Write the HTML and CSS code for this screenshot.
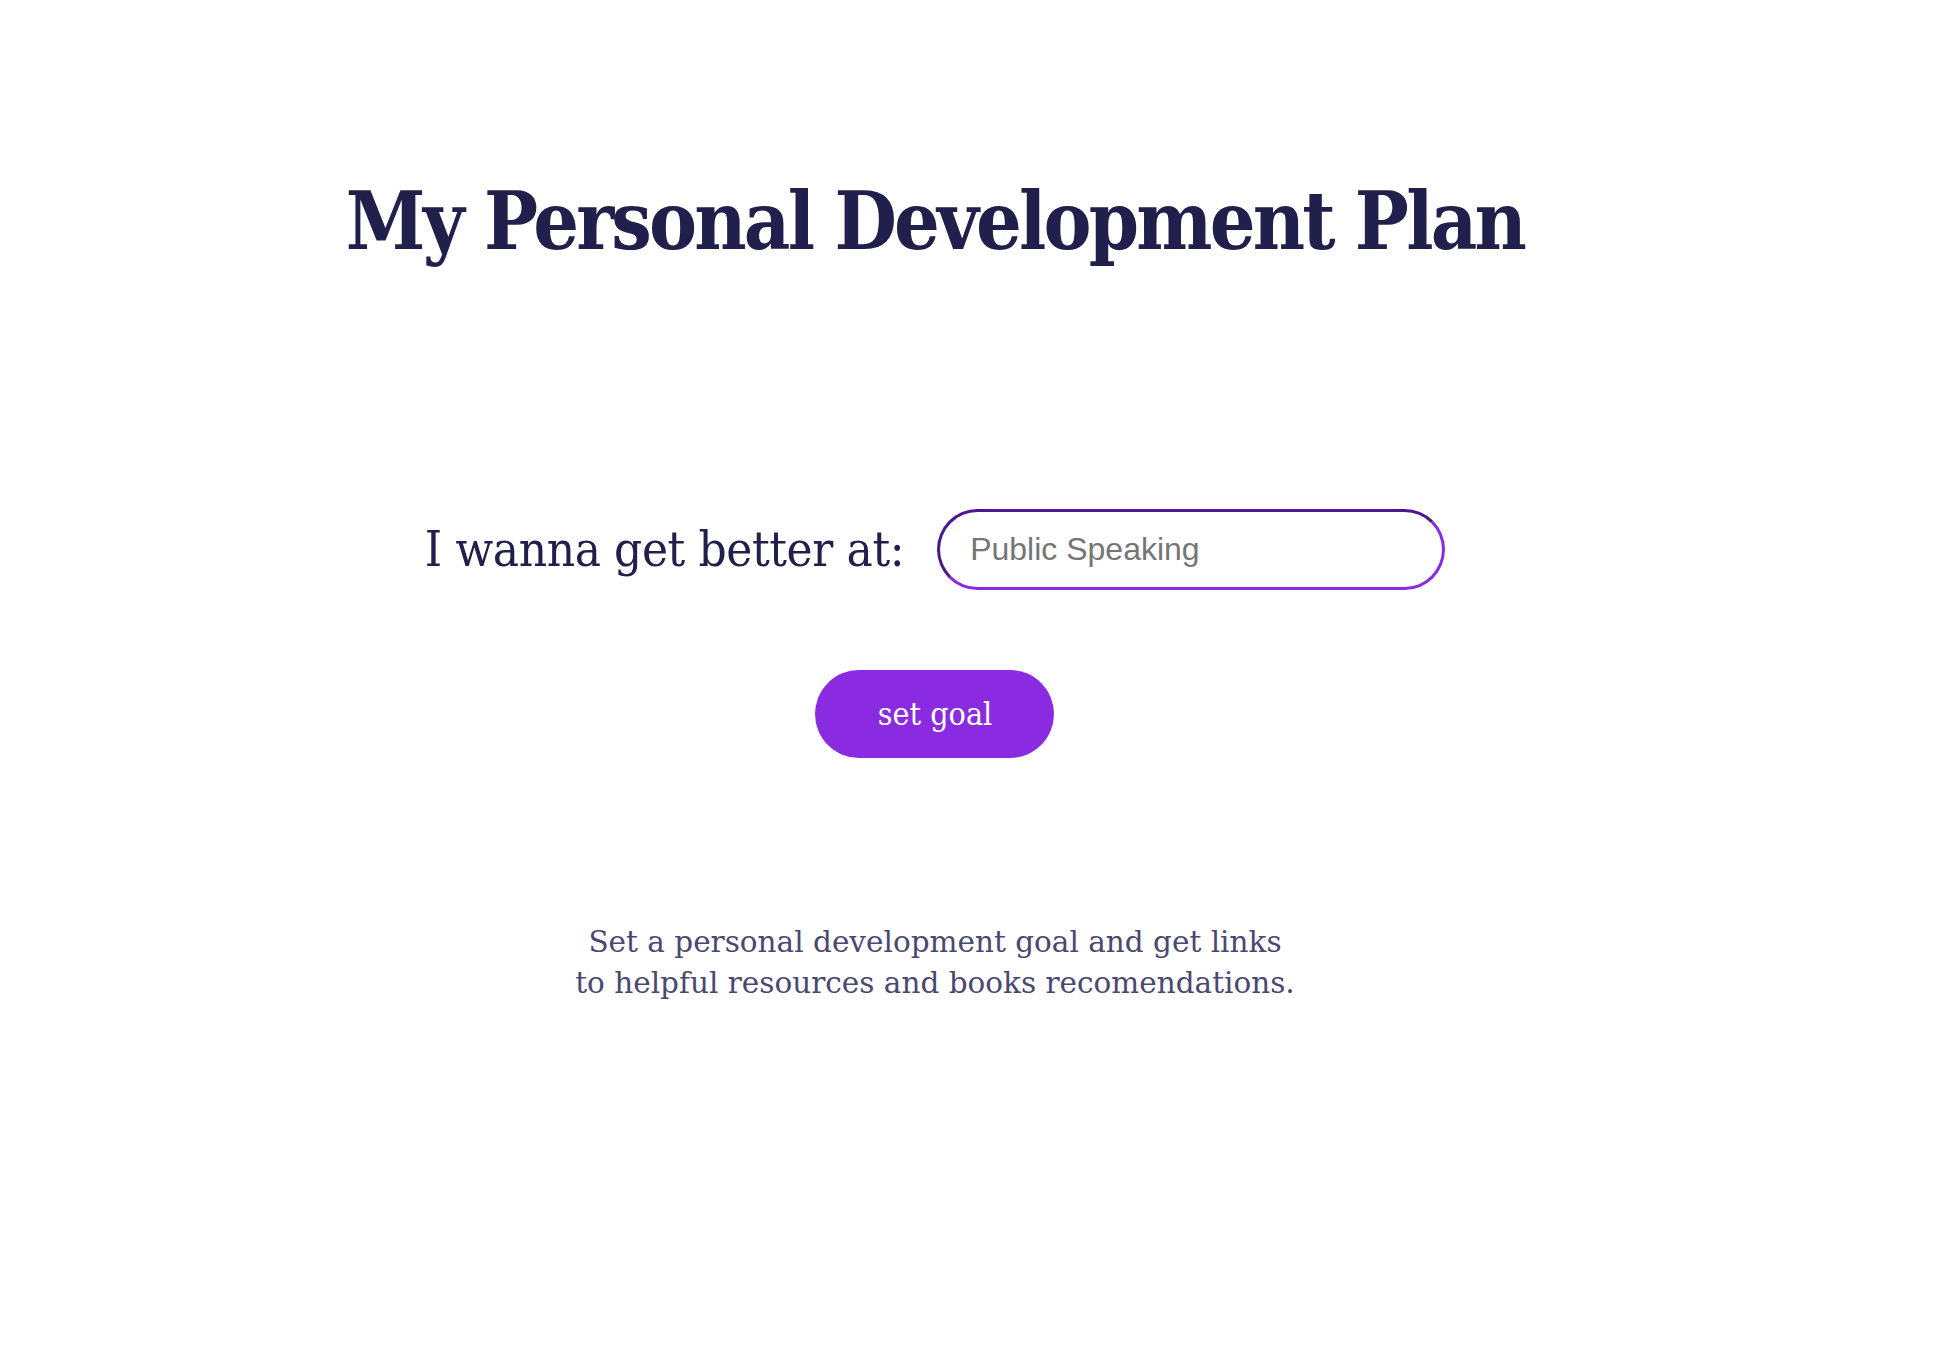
FILE: index.html
```html
<!DOCTYPE html>
<html lang="en">
<head>
<meta charset="utf-8">
<title>My Personal Development Plan</title>
<link rel="stylesheet" href="styles.css">
</head>
<body>
<main class="page">
  <h1 class="title">My Personal Development Plan</h1>
  <form class="goal-form">
    <div class="goal-row">
      <label class="goal-label" for="goal">I wanna get better at:</label>
      <input class="goal-input" id="goal" type="text" placeholder="Public Speaking">
    </div>
    <button class="goal-button" type="button">set goal</button>
  </form>
  <p class="intro">Set a personal development goal and get links<br>to helpful resources and books recomendations.</p>
</main>
</body>
</html>
```
FILE: styles.css
```css
html, body {
  margin: 0;
  padding: 0;
  background: #ffffff;
}

.page {
  width: 1870px;
  display: flex;
  flex-direction: column;
  align-items: center;
  font-family: "Roboto Slab", "DejaVu Serif Condensed", "DejaVu Serif", serif;
  font-stretch: condensed;
}

.title {
  margin: 171px 0 0;
  font-size: 80px;
  line-height: 100px;
  font-weight: 700;
  letter-spacing: -2.8px;
  color: #21204d;
}

.goal-form {
  margin-top: 238px;
  display: flex;
  flex-direction: column;
  align-items: center;
}

.goal-row {
  display: flex;
  align-items: center;
  gap: 33px;
}

.goal-label {
  font-size: 49px;
  letter-spacing: -0.4px;
  color: #21204d;
}

.goal-input {
  box-sizing: border-box;
  width: 508px;
  height: 81px;
  padding: 0 30px;
  border: 3px solid;
  border-color: #4b188d #8a2be2 #8a2be2 #4b188d;
  border-radius: 41px;
  font-family: "Liberation Sans", Arial, sans-serif;
  font-size: 32px;
  color: #333;
  outline: none;
}

.goal-input::placeholder {
  color: #757575;
}

.goal-button {
  margin-top: 80px;
  width: 239px;
  height: 88px;
  border: none;
  border-radius: 44px;
  background: #8a2be2;
  color: #ffffff;
  font-family: inherit;
  font-stretch: inherit;
  font-size: 32px;
}

.intro {
  margin: 164px 0 0;
  text-align: center;
  font-family: "Roboto Slab", "DejaVu Serif", serif;
  font-stretch: normal;
  font-size: 29.5px;
  line-height: 41px;
  color: #4a4871;
}
```
